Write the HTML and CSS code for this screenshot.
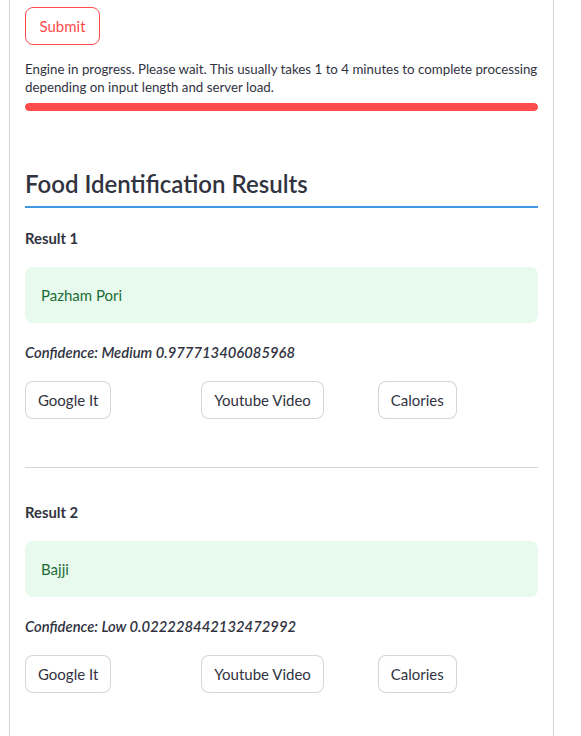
FILE: index.html
```html
<!DOCTYPE html>
<html>
<head>
<meta charset="utf-8">
<link rel="stylesheet" href="styles.css">
</head>
<body>
<div class="main">
  <div class="top">
    <button class="btn btn-primary">Submit</button>
  </div>
  <p class="status">Engine in progress. Please wait. This usually takes 1 to 4 minutes to complete processing depending on input length and server load.</p>
  <div class="progress"><div class="progress-fill" style="width:100%"></div></div>

  <h2 class="title">Food Identification Results</h2>

  <section class="result">
    <div class="result-label">Result 1</div>
    <div class="food">Pazham Pori</div>
    <div class="confidence">Confidence: Medium 0.977713406085968</div>
    <div class="actions">
      <div class="col"><button class="btn">Google It</button></div>
      <div class="col"><button class="btn">Youtube Video</button></div>
      <div class="col"><button class="btn">Calories</button></div>
    </div>
  </section>

  <hr class="divider">

  <section class="result">
    <div class="result-label">Result 2</div>
    <div class="food">Bajji</div>
    <div class="confidence">Confidence: Low 0.022228442132472992</div>
    <div class="actions">
      <div class="col"><button class="btn">Google It</button></div>
      <div class="col"><button class="btn">Youtube Video</button></div>
      <div class="col"><button class="btn">Calories</button></div>
    </div>
  </section>
</div>
</body>
</html>
```
FILE: styles.css
```css
html, body {
  margin: 0;
  padding: 0;
  background: #ffffff;
}
body {
  font-family: Lato, "Open Sans", sans-serif;
  color: rgb(49, 51, 63);
}
.main {
  margin-left: 9px;
  width: 513px;
  min-height: 736px;
  padding: 0 15px;
  border-left: 1px solid #d5d5d9;
  border-right: 1px solid #d5d5d9;
  box-sizing: content-box;
}
.top {
  padding-top: 7px;
}
.btn {
  font-family: inherit;
  font-size: 15px;
  color: rgb(49, 51, 63);
  background: #fff;
  border: 1px solid rgba(49, 51, 63, 0.2);
  border-radius: 8px;
  height: 38px;
  padding: 0 12px;
  box-sizing: border-box;
  line-height: 1;
}
.btn-primary {
  color: rgb(255, 75, 75);
  border-color: rgb(255, 75, 75);
  width: 75px;
}
.status {
  margin: 16px 0 0;
  font-size: 13.3px;
  line-height: 17.5px;
}
.progress {
  margin-top: 7px;
  height: 8px;
  border-radius: 4px;
  background: rgb(240, 242, 246);
  overflow: hidden;
}
.progress-fill {
  height: 100%;
  background: rgb(255, 75, 75);
  border-radius: 4px;
}
.title {
  margin: 57px 0 0;
  font-size: 24px;
  font-weight: 600;
  line-height: 32px;
  padding-bottom: 6px;
  border-bottom: 2px solid rgb(66, 151, 226);
}
.result {
  display: flex;
  flex-direction: column;
}
.result-label {
  margin-top: 20px;
  font-size: 14.8px;
  font-weight: 700;
  line-height: 20px;
}
.food {
  margin-top: 19px;
  height: 56px;
  box-sizing: border-box;
  padding: 0 16px;
  display: flex;
  align-items: center;
  background: rgb(232, 249, 238);
  border-radius: 8px;
  color: rgb(28, 110, 55);
  font-size: 15px;
}
.confidence {
  margin-top: 19px;
  font-size: 14.8px;
  font-style: italic;
  font-weight: 600;
  line-height: 20px;
}
.actions {
  margin-top: 19px;
  display: grid;
  grid-template-columns: repeat(3, 1fr);
  gap: 16px;
}
.divider {
  margin: 48px 0 14px;
  border: 0;
  border-top: 1px solid rgba(49, 51, 63, 0.2);
  height: 0;
}
```
